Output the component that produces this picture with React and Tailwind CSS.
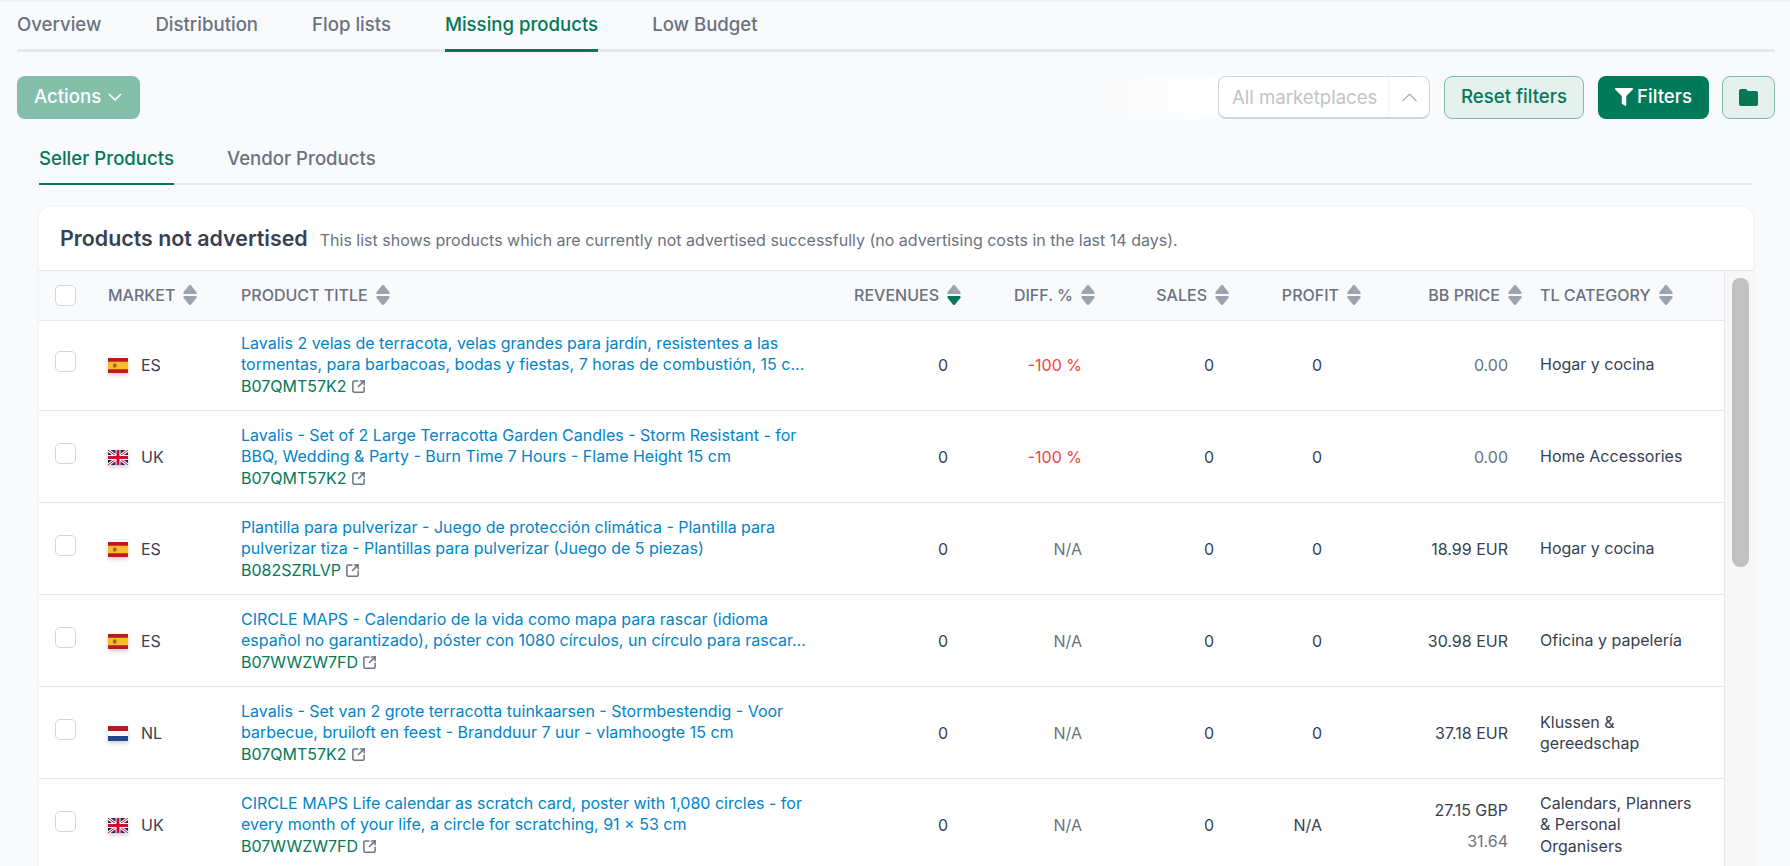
import { ChevronUp, SquareArrowOutUpRight } from "lucide-react";
import { FaFilter } from "react-icons/fa";

const rows = [
  {
    flag: "ES",
    height: "h-[90px]",
    title:
      "Lavalis 2 velas de terracota, velas grandes para jardín, resistentes a las tormentas, para barbacoas, bodas y fiestas, 7 horas de combustión, 15 c...",
    asin: "B07QMT57K2",
    diff: "-100 %",
    profit: "0",
    price: "0.00",
    muted: true,
    category: "Hogar y cocina",
  },
  {
    flag: "UK",
    height: "h-[92px] [&>td]:pt-[2px]",
    title:
      "Lavalis - Set of 2 Large Terracotta Garden Candles - Storm Resistant - for BBQ, Wedding & Party - Burn Time 7 Hours - Flame Height 15 cm",
    asin: "B07QMT57K2",
    diff: "-100 %",
    profit: "0",
    price: "0.00",
    muted: true,
    category: "Home Accessories",
  },
  {
    flag: "ES",
    height: "h-[92px] [&>td]:pt-[2px]",
    title:
      "Plantilla para pulverizar - Juego de protección climática - Plantilla para pulverizar tiza - Plantillas para pulverizar (Juego de 5 piezas)",
    asin: "B082SZRLVP",
    diff: "N/A",
    profit: "0",
    price: "18.99 EUR",
    category: "Hogar y cocina",
  },
  {
    flag: "ES",
    height: "h-[92px] [&>td]:pt-[2px]",
    title:
      "CIRCLE MAPS - Calendario de la vida como mapa para rascar (idioma español no garantizado), póster con 1080 círculos, un círculo para rascar...",
    asin: "B07WWZW7FD",
    diff: "N/A",
    profit: "0",
    price: "30.98 EUR",
    category: "Oficina y papelería",
  },
  {
    flag: "NL",
    height: "h-[92px] [&>td]:pt-[2px]",
    title:
      "Lavalis - Set van 2 grote terracotta tuinkaarsen - Stormbestendig - Voor barbecue, bruiloft en feest - Brandduur 7 uur - vlamhoogte 15 cm",
    asin: "B07QMT57K2",
    diff: "N/A",
    profit: "0",
    price: "37.18 EUR",
    category: "Klussen & gereedschap",
  },
  {
    flag: "UK",
    height: "h-[92px] [&>td]:pt-[2px]",
    title:
      "CIRCLE MAPS Life calendar as scratch card, poster with 1,080 circles - for every month of your life, a circle for scratching, 91 × 53 cm",
    asin: "B07WWZW7FD",
    diff: "N/A",
    profit: "N/A",
    price: "27.15 GBP",
    sub: "31.64",
    category: "Calendars, Planners & Personal Organisers",
  },
];

function SortIcon({ active }) {
  return (
    <svg width="14" height="20" viewBox="0 0 14 20" className="shrink-0">
      <path
        d="M5.9.5a1.5 1.5 0 0 1 2.2 0l5.3 6.4c.7.9.1 2.1-1 2.1H1.6c-1.1 0-1.7-1.2-1-2.1z"
        fill="#9ca3af"
      />
      <path
        d="M5.9 19.5a1.5 1.5 0 0 0 2.2 0l5.3-6.4c.7-.9.1-2.1-1-2.1H1.6c-1.1 0-1.7 1.2-1 2.1z"
        fill={active ? "#047857" : "#9ca3af"}
      />
    </svg>
  );
}

function Flag({ code }) {
  return (
    <svg
      width="20"
      height="15"
      viewBox="0 0 20 15"
      className="shrink-0 drop-shadow-[0_2px_2px_rgba(0,0,0,0.2)]"
    >
      {code === "ES" && (
        <>
          <rect width="20" height="15" fill="#b91c1c" />
          <rect y="3.75" width="20" height="7.5" fill="#f5bd2a" />
          <rect x="5" y="5.5" width="3.5" height="4" rx="1" fill="#b5562d" />
        </>
      )}
      {code === "NL" && (
        <>
          <rect width="20" height="5" fill="#ae1c28" />
          <rect y="5" width="20" height="5" fill="#ffffff" />
          <rect y="10" width="20" height="5" fill="#21468b" />
        </>
      )}
      {code === "UK" && (
        <>
          <rect width="20" height="15" fill="#1f2a6b" />
          <path d="M0 0 20 15M20 0 0 15" stroke="#fff" strokeWidth="3" />
          <path d="M0 0 20 15M20 0 0 15" stroke="#c8102e" strokeWidth="1" />
          <path d="M10 0v15M0 7.5h20" stroke="#fff" strokeWidth="5" />
          <path d="M10 0v15M0 7.5h20" stroke="#c8102e" strokeWidth="3" />
        </>
      )}
    </svg>
  );
}

function Checkbox() {
  return (
    <div className="w-[21px] h-[21px] rounded-[5px] border border-[#d1d5db] bg-white" />
  );
}

function HeadCell({ label, active, right, className }) {
  return (
    <th className={`p-0 font-medium ${className}`}>
      <div
        className={`flex items-center gap-2 ${right ? "justify-end" : ""}`}
      >
        <span className="uppercase">{label}</span>
        <SortIcon active={active} />
      </div>
    </th>
  );
}

function App() {
  return (
    <div className="h-screen overflow-hidden bg-[#f9fafb] [font-family:Inter,sans-serif] pl-[17px] pr-[15px] border-t-2 border-[#f1f2f5]">
      <div className="flex gap-[54px] h-[50px] border-b-[3px] border-[#e5e7eb] text-[18.6px] font-medium text-[#6b7280]">
        <div className="pt-[9px]">Overview</div>
        <div className="pt-[9px]">Distribution</div>
        <div className="pt-[9px]">Flop lists</div>
        <div className="pt-[9px] h-[50px] border-b-[3px] border-[#047857] text-[#047857]">
          Missing products
        </div>
        <div className="pt-[9px]">Low Budget</div>
      </div>

      <div className="flex items-center mt-6 h-[43px] text-[18.6px] font-medium">
        <button className="flex items-center gap-[7px] h-full w-[123px] pl-[17px] pb-px rounded-lg bg-[#83bfa9] text-white">
          Actions
          <svg width="14" height="8" viewBox="0 0 14 8" fill="none" stroke="currentColor" strokeWidth="1.6">
            <path d="M1 1l6 6 6-6" />
          </svg>
        </button>
        <div className="ml-auto w-[110px] h-full bg-gradient-to-r from-transparent to-white" />
        <div className="flex items-center w-[212px] h-full bg-white rounded-lg border border-[#d1d5db] border-b-2 text-[#c0c3ca] font-normal">
          <span className="pl-[13px] w-[169px] pt-px">All marketplaces</span>
          <span className="flex flex-1 justify-center items-center h-full border-l border-[#f3f4f6]">
            <ChevronUp size={27} strokeWidth={1} className="text-[#9ca3af]" />
          </span>
        </div>
        <button className="ml-[14px] w-[140px] h-full pb-px rounded-lg bg-[#e5f1ed] border border-[#80bcaa] text-[#047857]">
          Reset filters
        </button>
        <button className="flex items-center justify-center gap-1 ml-[14px] w-[111px] h-full pb-px rounded-lg bg-[#007a58] text-white">
          <FaFilter size={18} />
          Filters
        </button>
        <button className="flex items-center justify-center ml-[13px] w-[53px] h-full rounded-lg bg-[#e5f1ed] border border-[#80bcaa] text-[#047857]">
          <svg width="19" height="17" viewBox="0 0 19 17" fill="currentColor">
            <path d="M2 0h5l2 2h8a2 2 0 0 1 2 2v11a2 2 0 0 1-2 2H2a2 2 0 0 1-2-2V2a2 2 0 0 1 2-2z" />
          </svg>
        </button>
      </div>

      <div className="mx-[22px]">
        <div className="flex gap-[53px] h-[66px] border-b-2 border-[#e5e7eb] text-[18.6px] font-medium text-[#6b7280]">
          <div className="pt-[26px] h-[66px] border-b-2 border-[#047857] text-[#047857]">
            Seller Products
          </div>
          <div className="pt-[26px]">Vendor Products</div>
        </div>

        <div className="mt-[22px] bg-white rounded-t-xl shadow-[0_0_4px_rgba(0,0,0,0.06)]">
          <div className="flex items-baseline gap-3 h-[64px] pl-[21px] pt-[15px] border-b border-[#e5e7eb]">
            <h2 className="text-[21.4px] font-semibold text-[#374151]">
              Products not advertised
            </h2>
            <p className="text-[16px] text-[#6b7280]">
              This list shows products which are currently not advertised
              successfully (no advertising costs in the last 14 days).
            </p>
          </div>

          <div className="flex">
            <table className="table-fixed w-[1685px] text-[16px] text-[#374151]">
              <colgroup>
                <col className="w-[53px]" />
                <col className="w-[134px]" />
                <col className="w-[596px]" />
                <col className="w-[155px]" />
                <col className="w-[134px]" />
                <col className="w-[134px]" />
                <col className="w-[131px]" />
                <col className="w-[162px]" />
                <col className="w-[186px]" />
              </colgroup>
              <thead>
                <tr className="h-[49px] bg-[#f9fafb] border-b border-[#e5e7eb] text-[#6b7280]">
                  <th className="p-0 pl-4 font-normal">
                    <Checkbox />
                  </th>
                  <HeadCell label="Market" className="pl-4" />
                  <HeadCell label="Product title" className="pl-[15px]" />
                  <HeadCell label="Revenues" active right className="pr-4" />
                  <HeadCell label="Diff. %" right className="pr-4" />
                  <HeadCell label="Sales" right className="pr-4" />
                  <HeadCell label="Profit" right className="pr-[15px]" />
                  <HeadCell label="BB Price" right className="pr-4" />
                  <HeadCell label="TL Category" className="pl-[2px]" />
                </tr>
              </thead>
              <tbody>
                {rows.map((row) => (
                  <tr
                    key={row.title}
                    className={`${row.height} border-b border-[#e5e7eb]`}
                  >
                    <td className="p-0 pl-4 pb-2">
                      <Checkbox />
                    </td>
                    <td className="p-0 pl-4">
                      <div className="flex items-center gap-[13px]">
                        <Flag code={row.flag} />
                        {row.flag}
                      </div>
                    </td>
                    <td className="p-0 pl-[15px] pr-3 leading-[21.5px]">
                      <div className="text-[#0284c7]">{row.title}</div>
                      <div className="flex items-center gap-1 text-[#047857]">
                        {row.asin}
                        <SquareArrowOutUpRight
                          size={15}
                          strokeWidth={2.4}
                          className="text-[#6b7280]"
                        />
                      </div>
                    </td>
                    <td className="p-0 pr-[29px] text-right">0</td>
                    <td
                      className={`p-0 pr-[29px] text-right ${
                        row.diff === "N/A" ? "text-[#6b7280]" : "text-[#ef4444]"
                      }`}
                    >
                      {row.diff}
                    </td>
                    <td className="p-0 pr-[31px] text-right">0</td>
                    <td className="p-0 pr-[54px] text-right">{row.profit}</td>
                    <td className="p-0 pr-[30px] text-right">
                      <div className={row.muted ? "text-[#6b7280]" : ""}>
                        {row.price}
                      </div>
                      {row.sub && (
                        <div className="mt-[7px] text-[#6b7280]">{row.sub}</div>
                      )}
                    </td>
                    <td className="p-0 pl-[2px] pr-[32px] leading-[21.5px]">
                      {row.category}
                    </td>
                  </tr>
                ))}
              </tbody>
            </table>
            <div className="flex-1 bg-[#f7f7f7] border-l border-[#e5e7eb] pt-[7px] pl-[7px]">
              <div className="w-[17px] h-[289px] rounded-lg bg-[#c1c1c1]" />
            </div>
          </div>
        </div>
      </div>
    </div>
  );
}

export default App;
